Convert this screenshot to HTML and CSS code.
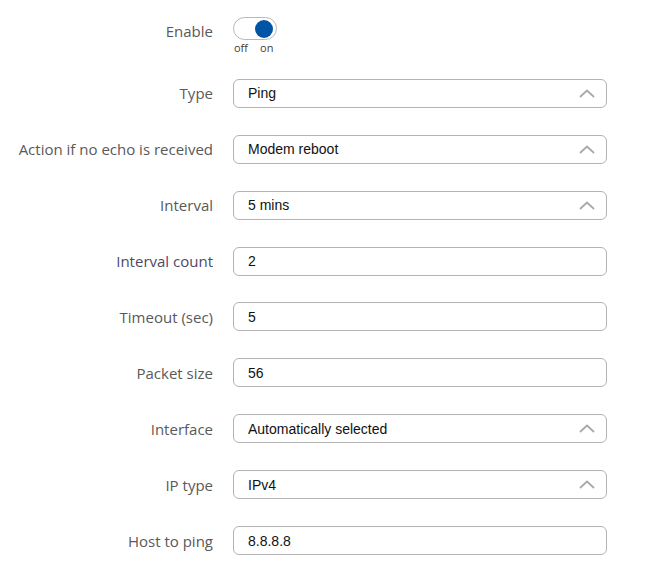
FILE: index.html
```html
<!DOCTYPE html>
<html>
<head>
<meta charset="utf-8">
<link rel="stylesheet" href="styles.css">
</head>
<body>
<form class="form">
  <div class="row row-enable">
    <label class="label">Enable</label>
    <div class="control">
      <div class="switch"><span class="knob"></span></div>
      <div class="switch-text"><span>off</span><span>on</span></div>
    </div>
  </div>
  <div class="row">
    <label class="label">Type</label>
    <div class="field select"><span>Ping</span><svg class="chev" width="16" height="9" viewBox="0 0 16 9"><polyline points="1,8 8,1.5 15,8" /></svg></div>
  </div>
  <div class="row">
    <label class="label">Action if no echo is received</label>
    <div class="field select"><span>Modem reboot</span><svg class="chev" width="16" height="9" viewBox="0 0 16 9"><polyline points="1,8 8,1.5 15,8" /></svg></div>
  </div>
  <div class="row">
    <label class="label">Interval</label>
    <div class="field select"><span>5 mins</span><svg class="chev" width="16" height="9" viewBox="0 0 16 9"><polyline points="1,8 8,1.5 15,8" /></svg></div>
  </div>
  <div class="row">
    <label class="label visited">Interval count</label>
    <div class="field"><span>2</span></div>
  </div>
  <div class="row">
    <label class="label">Timeout (sec)</label>
    <div class="field"><span>5</span></div>
  </div>
  <div class="row">
    <label class="label">Packet size</label>
    <div class="field"><span>56</span></div>
  </div>
  <div class="row">
    <label class="label">Interface</label>
    <div class="field select"><span>Automatically selected</span><svg class="chev" width="16" height="9" viewBox="0 0 16 9"><polyline points="1,8 8,1.5 15,8" /></svg></div>
  </div>
  <div class="row">
    <label class="label">IP type</label>
    <div class="field select"><span>IPv4</span><svg class="chev" width="16" height="9" viewBox="0 0 16 9"><polyline points="1,8 8,1.5 15,8" /></svg></div>
  </div>
  <div class="row">
    <label class="label">Host to ping</label>
    <div class="field"><span>8.8.8.8</span></div>
  </div>
</form>
</body>
</html>
```

FILE: styles.css
```css
html, body {
  margin: 0;
  padding: 0;
  background: #ffffff;
}

.form {
  display: flex;
  flex-direction: column;
  gap: 26.9px;
  padding-top: 16px;
  width: 646px;
}

.row {
  display: grid;
  grid-template-columns: 213px 374px;
  column-gap: 20px;
  align-items: center;
  height: 29px;
}

.row-enable {
  height: 36px;
  align-items: start;
}

.label {
  font-family: "Open Sans", "Liberation Sans", sans-serif;
  font-size: 15px;
  color: #595959;
  text-align: right;
  line-height: 20px;
}

.row-enable .label {
  padding-top: 5px;
}

.label.visited {
  color: #4f4868;
}

.control {
  display: flex;
  flex-direction: column;
}

.switch {
  box-sizing: border-box;
  width: 44px;
  height: 23px;
  margin-top: 1px;
  border: 1px solid #b8b8b8;
  border-radius: 12px;
  display: flex;
  align-items: center;
  justify-content: flex-end;
  padding-right: 3px;
}

.switch .knob {
  width: 18px;
  height: 18px;
  border-radius: 50%;
  background: #0054a6;
}

.switch-text {
  display: flex;
  gap: 12px;
  font-family: "Open Sans", "Liberation Sans", sans-serif;
  font-size: 11px;
  color: #404040;
  line-height: 13px;
  padding-left: 1px;
  margin-top: 1px;
}

.field {
  box-sizing: border-box;
  height: 29px;
  border: 1px solid #b4b4b4;
  border-radius: 6px;
  display: flex;
  align-items: center;
  justify-content: space-between;
  padding: 0 11px 0 14px;
  font-family: "Liberation Sans", Arial, sans-serif;
  font-size: 14px;
  color: #111111;
}

.chev {
  display: block;
  fill: none;
  stroke: #a9a9a9;
  stroke-width: 1.8;
}
```
